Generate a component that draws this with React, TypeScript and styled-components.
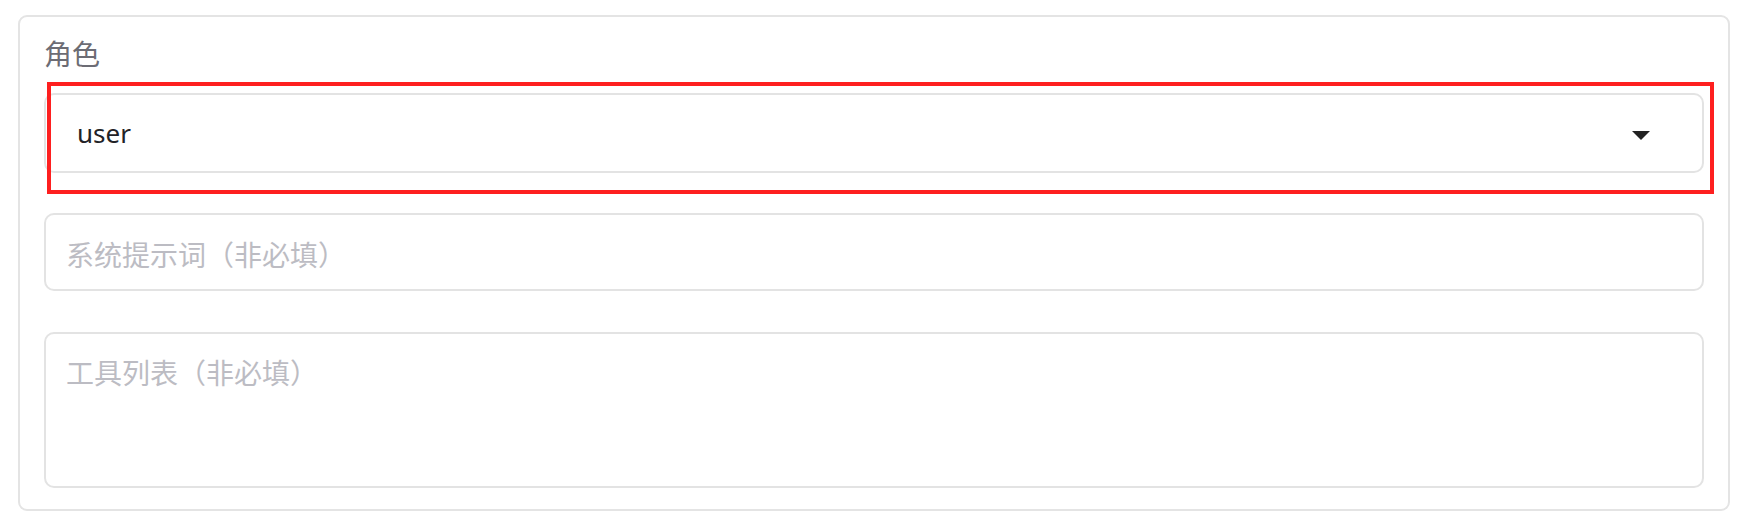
import React from "react";
import styled, { createGlobalStyle } from "styled-components";

const GlobalStyle = createGlobalStyle`
  html, body {
    margin: 0;
    padding: 0;
    background: #ffffff;
  }
  body {
    font-family: "Noto Sans", "Noto Sans CJK SC", sans-serif;
  }
  * { box-sizing: border-box; }
`;

const Page = styled.div`
  padding: 15px 14px 0 18px;
`;

const Card = styled.div`
  border: 2px solid #e4e4e4;
  border-radius: 9px;
  padding: 17px 24px 21px 24px;
  display: flex;
  flex-direction: column;
`;

const Label = styled.div`
  font-family: "Noto Sans CJK SC", sans-serif;
  font-size: 28px;
  line-height: 38px;
  color: #6c6c74;
  margin-bottom: 21px;
`;

const SelectWrap = styled.div`
  position: relative;
`;

const SelectBox = styled.div`
  height: 80px;
  border: 2px solid #e3e3e3;
  border-radius: 10px;
  display: flex;
  align-items: center;
  justify-content: space-between;
  padding: 0 52px 0 31px;
  background: #fff;
`;

const SelectValue = styled.span`
  font-family: "Noto Sans", "Noto Sans CJK SC", sans-serif;
  font-size: 26px;
  line-height: 36px;
  color: #222226;
`;

const Caret = styled.svg`
  width: 18px;
  height: 9px;
  margin-top: 5px;
  display: block;
`;

const Highlight = styled.div`
  position: absolute;
  left: 3px;
  right: -10px;
  top: -11px;
  bottom: -21px;
  border: 4px solid #fe1f1f;
  pointer-events: none;
`;

const fieldBase = `
  width: 100%;
  border: 2px solid #e3e3e3;
  border-radius: 10px;
  background: #fff;
  font-family: "Noto Sans CJK SC", sans-serif;
  font-size: 28px;
  line-height: 38px;
  color: #222226;
  outline: none;
  margin: 0;
  &::placeholder {
    color: #bcbcc3;
    opacity: 1;
  }
`;

const PromptInput = styled.input`
  ${fieldBase}
  display: block;
  height: 78px;
  margin-top: 40px;
  padding: 4px 20px 0 20px;
`;

const ToolsArea = styled.textarea`
  ${fieldBase}
  display: block;
  height: 156px;
  margin-top: 41px;
  padding: 19px 20px 17px 20px;
  resize: none;
`;

export default function App() {
  return (
    <>
      <GlobalStyle />
      <Page>
        <Card>
          <Label>角色</Label>
          <SelectWrap>
            <SelectBox>
              <SelectValue>user</SelectValue>
              <Caret viewBox="0 0 18 9">
                <polygon points="0,0 18,0 9,9" fill="#222" />
              </Caret>
            </SelectBox>
            <Highlight />
          </SelectWrap>
          <PromptInput placeholder="系统提示词（非必填）" />
          <ToolsArea placeholder="工具列表（非必填）" />
        </Card>
      </Page>
    </>
  );
}
